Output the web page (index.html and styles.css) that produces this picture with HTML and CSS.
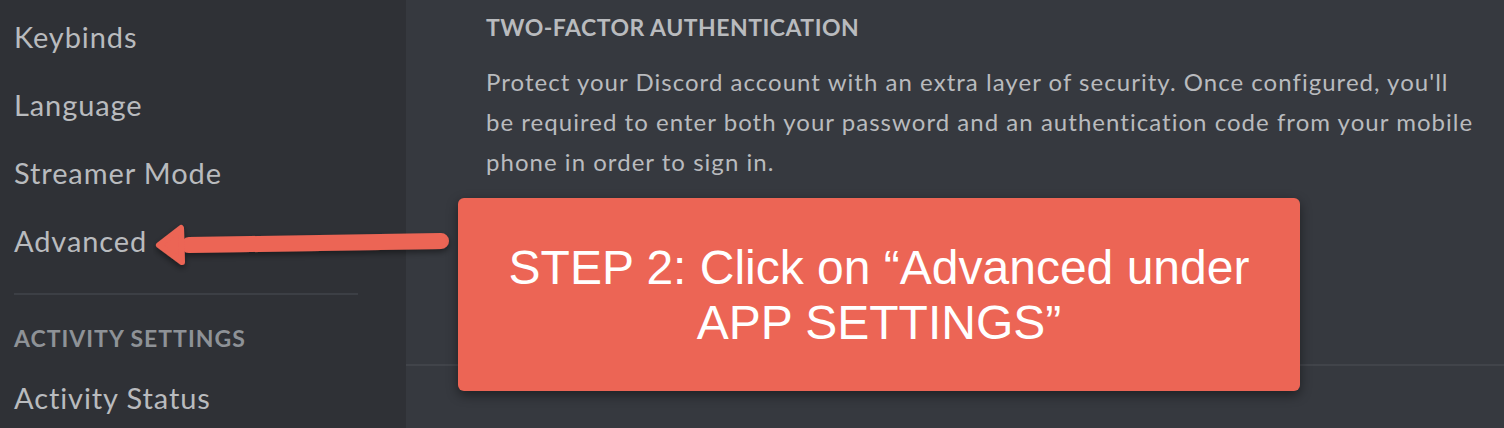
FILE: index.html
```html
<!DOCTYPE html>
<html lang="en">
<head>
<meta charset="utf-8">
<title>Discord settings — Step 2</title>
<link rel="stylesheet" href="styles.css">
</head>
<body>
<div class="app">
  <nav class="sidebar">
    <div class="nav-item">Keybinds</div>
    <div class="nav-item">Language</div>
    <div class="nav-item">Streamer Mode</div>
    <div class="nav-item">Advanced</div>
    <div class="nav-sep"></div>
    <div class="nav-header">ACTIVITY SETTINGS</div>
    <div class="nav-item">Activity Status</div>
  </nav>
  <main class="content">
    <h2 class="section-title">TWO-FACTOR AUTHENTICATION</h2>
    <p class="section-desc">Protect your Discord account with an extra layer of security. Once configured, you'll<br>be required to enter both your password and an authentication code from your mobile<br>phone in order to sign in.</p>
    <div class="content-sep"></div>
  </main>
</div>
<svg class="arrow" width="320" height="60" viewBox="0 0 320 60" aria-hidden="true">
  <defs>
    <filter id="sh" x="-20%" y="-50%" width="140%" height="200%">
      <feDropShadow dx="0" dy="3" stdDeviation="3" flood-color="#000" flood-opacity="0.45"/>
    </filter>
  </defs>
  <g filter="url(#sh)" fill="#ec6555" stroke="#ec6555" stroke-linejoin="round" stroke-linecap="round">
    <line x1="36" y1="30" x2="288" y2="26" stroke-width="16"/>
    <polygon points="6,30 28,13 29,47" stroke-width="6"/>
  </g>
</svg>
<div class="callout">STEP 2: Click on “Advanced under<br>APP SETTINGS”</div>
</body>
</html>
```
FILE: styles.css
```css
html, body {
  margin: 0;
  padding: 0;
  height: 100%;
  overflow: hidden;
}
body {
  background: #36393f;
  font-family: Lato, "Open Sans", sans-serif;
  position: relative;
}
.app {
  display: flex;
  height: 428px;
}
.sidebar {
  width: 406px;
  flex: none;
  background: #2f3136;
  padding: 3px 48px 0 14px;
  box-sizing: border-box;
}
.nav-item {
  color: #b9bbbe;
  font-size: 29px;
  letter-spacing: 0.9px;
  line-height: 68px;
  height: 68px;
}
.nav-sep {
  height: 2px;
  background: #3c3f45;
  margin: 18px 0 0 0;
}
.nav-header {
  color: #8e9297;
  font-size: 23px;
  font-weight: 700;
  letter-spacing: 1px;
  line-height: 30px;
  margin-top: 28px;
}
.nav-header + .nav-item {
  margin-top: 11px;
}
.content {
  flex: 1;
  padding: 12px 0 0 80px;
}
.section-title {
  margin: 0;
  color: #b9bbbe;
  font-size: 23px;
  font-weight: 700;
  letter-spacing: 0.5px;
  line-height: 30px;
}
.section-desc {
  margin: 20px 0 0 0;
  color: #b9bbbe;
  font-size: 24px;
  letter-spacing: 1.03px;
  line-height: 40px;
  white-space: nowrap;
}
.content-sep {
  height: 2px;
  background: #41444a;
  margin: 182px 0 0 -80px;
}
.callout {
  position: absolute;
  left: 458px;
  top: 198px;
  width: 842px;
  height: 193px;
  box-sizing: border-box;
  background: #ec6555;
  border-radius: 6px;
  box-shadow: 0 4px 12px rgba(0, 0, 0, 0.45);
  color: #ffffff;
  font-family: "Liberation Sans", Arial, sans-serif;
  font-size: 48px;
  line-height: 55px;
  text-align: center;
  display: flex;
  align-items: center;
  justify-content: center;
}
.arrow {
  position: absolute;
  left: 153px;
  top: 215px;
}
```
